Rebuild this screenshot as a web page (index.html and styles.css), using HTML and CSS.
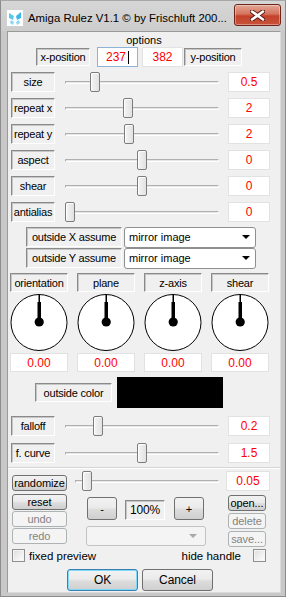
FILE: index.html
```
<!DOCTYPE html>
<html>
<head>
    <meta charset="utf-8">
    <title>Amiga Rulez</title>
    <link rel="stylesheet" href="styles.css">
</head>
<body>
<div class="window">
    <div class="titlebar">
        <svg class="app-icon" width="16" height="16" viewBox="0 0 16 16">
            <rect x="0" y="0" width="16" height="16" fill="#fff"/>
            <path d="M2 3 L7 6 L6 10 L2 8 Z" fill="#5cc8f0"/>
            <path d="M14 2 L9 6 L10 10 L14 8 Z" fill="#3fb6e8"/>
            <path d="M4 10 L7 12 L6 15 L3 13 Z" fill="#8ad8f5"/>
            <path d="M12 10 L9 12 L10 15 L13 13 Z" fill="#8ad8f5"/>
        </svg>
        <span class="title">Amiga Rulez V1.1 © by Frischluft 200...</span>
        <div class="close">
            <svg width="15" height="11" viewBox="0 0 15 11">
                <path d="M2 1.5 L13 9.5 M13 1.5 L2 9.5" stroke="#5a1a10" stroke-width="4.5" stroke-linecap="round"/>
                <path d="M2 1.5 L13 9.5 M13 1.5 L2 9.5" stroke="#fff" stroke-width="2.6" stroke-linecap="round"/>
            </svg>
        </div>
    </div>
    <div class="client">
        <div class="caption">options</div>
        <div class="xy-row">
            <div class="label xy-label">x-position</div>
            <div class="value edit focused">237<span class="caret"></span></div>
            <div class="value edit">382</div>
            <div class="label xy-label wide">y-position</div>
        </div>

        <div class="sliders">
            <div class="srow">
                <div class="label">size</div>
                <div class="slider"><div class="track"></div><div class="thumb" style="left:25px"></div></div>
                <div class="value">0.5</div>
            </div>
            <div class="srow">
                <div class="label">repeat x</div>
                <div class="slider"><div class="track"></div><div class="thumb" style="left:58px"></div></div>
                <div class="value">2</div>
            </div>
            <div class="srow">
                <div class="label">repeat y</div>
                <div class="slider"><div class="track"></div><div class="thumb" style="left:59px"></div></div>
                <div class="value">2</div>
            </div>
            <div class="srow">
                <div class="label">aspect</div>
                <div class="slider"><div class="track"></div><div class="thumb" style="left:72px"></div></div>
                <div class="value">0</div>
            </div>
            <div class="srow">
                <div class="label">shear</div>
                <div class="slider"><div class="track"></div><div class="thumb" style="left:72px"></div></div>
                <div class="value">0</div>
            </div>
            <div class="srow">
                <div class="label">antialias</div>
                <div class="slider"><div class="track"></div><div class="thumb" style="left:0px"></div></div>
                <div class="value">0</div>
            </div>
        </div>

        <div class="assume">
            <div class="arow">
                <div class="label alabel">outside X assume</div>
                <div class="select">mirror image<span class="arrow"></span></div>
            </div>
            <div class="arow">
                <div class="label alabel">outside Y assume</div>
                <div class="select">mirror image<span class="arrow"></span></div>
            </div>
        </div>

        <div class="dials">
            <div class="dial">
                <div class="label dlabel">orientation</div>
                <svg class="knob" width="60" height="58" viewBox="0 0 60 58">
                    <circle cx="30" cy="28.5" r="28" fill="#fff" stroke="#000"/>
                    <rect x="29.5" y="1" width="1.5" height="8" fill="#000"/>
                    <rect x="28.5" y="8" width="3.5" height="18" fill="#000"/>
                    <circle cx="30.2" cy="28" r="4.6" fill="#000"/>
                </svg>
                <div class="value dvalue">0.00</div>
            </div>
            <div class="dial">
                <div class="label dlabel">plane</div>
                <svg class="knob" width="60" height="58" viewBox="0 0 60 58">
                    <circle cx="30" cy="28.5" r="28" fill="#fff" stroke="#000"/>
                    <rect x="29.5" y="1" width="1.5" height="8" fill="#000"/>
                    <rect x="28.5" y="8" width="3.5" height="18" fill="#000"/>
                    <circle cx="30.2" cy="28" r="4.6" fill="#000"/>
                </svg>
                <div class="value dvalue">0.00</div>
            </div>
            <div class="dial">
                <div class="label dlabel">z-axis</div>
                <svg class="knob" width="60" height="58" viewBox="0 0 60 58">
                    <circle cx="30" cy="28.5" r="28" fill="#fff" stroke="#000"/>
                    <rect x="29.5" y="1" width="1.5" height="8" fill="#000"/>
                    <rect x="28.5" y="8" width="3.5" height="18" fill="#000"/>
                    <circle cx="30.2" cy="28" r="4.6" fill="#000"/>
                </svg>
                <div class="value dvalue">0.00</div>
            </div>
            <div class="dial">
                <div class="label dlabel">shear</div>
                <svg class="knob" width="60" height="58" viewBox="0 0 60 58">
                    <circle cx="30" cy="28.5" r="28" fill="#fff" stroke="#000"/>
                    <rect x="29.5" y="1" width="1.5" height="8" fill="#000"/>
                    <rect x="28.5" y="8" width="3.5" height="18" fill="#000"/>
                    <circle cx="30.2" cy="28" r="4.6" fill="#000"/>
                </svg>
                <div class="value dvalue">0.00</div>
            </div>
        </div>

        <div class="color-row">
            <div class="label clabel">outside color</div>
            <div class="swatch"></div>
        </div>

        <div class="sliders falloff">
            <div class="srow">
                <div class="label">falloff</div>
                <div class="slider"><div class="track"></div><div class="thumb" style="left:28px"></div></div>
                <div class="value">0.2</div>
            </div>
            <div class="srow">
                <div class="label">f. curve</div>
                <div class="slider"><div class="track"></div><div class="thumb" style="left:72px"></div></div>
                <div class="value">1.5</div>
            </div>
        </div>

        <div class="separator"></div>

        <div class="rand-row">
            <div class="btn">randomize</div>
            <div class="slider rslider"><div class="track"></div><div class="thumb" style="left:7px"></div></div>
            <div class="value rvalue">0.05</div>
        </div>

        <div class="tools">
            <div class="col-left">
                <div class="btn">reset</div>
                <div class="btn disabled">undo</div>
                <div class="btn disabled">redo</div>
            </div>
            <div class="col-mid">
                <div class="zoom-row">
                    <div class="btn big">-</div>
                    <div class="label zoombox">100%</div>
                    <div class="btn big">+</div>
                </div>
                <div class="combo"><span class="arrow grey"></span></div>
            </div>
            <div class="col-right">
                <div class="btn">open...</div>
                <div class="btn disabled">delete</div>
                <div class="btn disabled">save...</div>
            </div>
        </div>

        <div class="checks">
            <div class="check"><span class="box"></span>fixed preview</div>
            <div class="check right">hide handle<span class="box"></span></div>
        </div>

        <div class="dialog-buttons">
            <div class="btn dlg default">OK</div>
            <div class="btn dlg">Cancel</div>
        </div>
    </div>
</div>
</body>
</html>
```

FILE: styles.css
```
* {
    margin: 0;
    padding: 0;
    box-sizing: border-box;
}

body {
    background-color: #ffffff;
    font-family: "Liberation Sans", Tahoma, sans-serif;
    font-size: 11px;
    color: #000000;
}

.window {
    width: 286px;
    height: 597px;
    background-color: #c8c8c8;
    border: 1px solid #8c8c8c;
    border-top-color: #a8a8a8;
    display: flex;
    flex-direction: column;
    padding: 0 4px 3px 6px;
}

.titlebar {
    height: 30px;
    display: flex;
    align-items: center;
    background: linear-gradient(#d6d6d6, #cdcdcd);
    margin: 0 -4px 0 -6px;
    padding: 0 4px 0 6px;
}

.app-icon {
    flex: none;
    margin-top: 3px;
}

.title {
    flex: 1;
    margin-left: 5px;
    margin-top: 3px;
    font-size: 11.4px;
    white-space: nowrap;
    color: #000;
}

.close {
    flex: none;
    width: 47px;
    height: 22px;
    margin-top: -2px;
    border: 1px solid #6d2419;
    border-radius: 3px;
    background: linear-gradient(#e3a796 0%, #d4745e 45%, #c4412a 55%, #c8523a 100%);
    display: flex;
    align-items: center;
    justify-content: center;
    box-shadow: inset 0 0 0 1px rgba(255, 255, 255, 0.35);
}

.client {
    flex: 1;
    background-color: #f0f0f0;
    border: 1px solid #9a9a9a;
    border-right-color: #dadada;
    border-bottom-color: #dadada;
    display: flex;
    flex-direction: column;
}

.caption {
    height: 14px;
    line-height: 14px;
    text-align: center;
    font-size: 11px;
    margin-top: 1px;
}

.label {
    background-color: #f0f0f0;
    border: 1px solid;
    border-color: #8a8a8a #ffffff #ffffff #8a8a8a;
    box-shadow: inset 1px 1px 0 #c6c6c6;
    display: flex;
    align-items: center;
    justify-content: center;
    white-space: nowrap;
    font-size: 11px;
    letter-spacing: -0.2px;
}

.value {
    background-color: #ffffff;
    border: 1px solid #e2e2e2;
    color: #ff0000;
    font-size: 12px;
    display: flex;
    align-items: center;
    justify-content: center;
}

.xy-row {
    display: flex;
    align-items: center;
    height: 20px;
    margin-top: 0;
    padding-left: 28px;
}

.xy-label {
    width: 54px;
    height: 18px;
}

.xy-label.wide {
    width: 58px;
    margin-left: 1px;
}

.edit {
    width: 41px;
    height: 20px;
    margin-left: 7px;
}

.edit + .edit {
    margin-left: 4px;
}

.edit.focused {
    border-color: #8fb3d6;
}

.caret {
    display: inline-block;
    width: 1px;
    height: 13px;
    background-color: #000;
    margin-left: 2px;
}

.sliders {
    display: flex;
    flex-direction: column;
    gap: 6px;
    margin-top: 5px;
}

.srow {
    display: grid;
    grid-template-columns: 44px 154px 41px;
    column-gap: 10px;
    padding-left: 3px;
    height: 20px;
    align-items: center;
}

.srow .label {
    height: 20px;
}

.srow .value {
    height: 20px;
    margin-left: -1px;
}

.slider {
    position: relative;
    height: 20px;
}

.track {
    position: absolute;
    left: 0;
    right: 0;
    top: 9px;
    height: 3px;
    border-top: 1px solid #b0b0b0;
    border-bottom: 1px solid #ffffff;
    border-left: 1px solid #b0b0b0;
    border-right: 1px solid #ffffff;
    background-color: #e6e6e6;
}

.thumb {
    position: absolute;
    top: 0;
    width: 10px;
    height: 20px;
    border: 1px solid #7c7c7c;
    border-radius: 2px;
    background: linear-gradient(90deg, #f4f4f4, #e2e2e2);
    box-shadow: inset 1px 1px 0 #ffffff;
}

.assume {
    display: flex;
    flex-direction: column;
    gap: 1px;
    margin-top: 5px;
    padding-left: 18px;
}

.arow {
    display: flex;
    align-items: center;
    height: 20px;
}

.alabel {
    width: 96px;
    height: 20px;
}

.select {
    width: 132px;
    height: 21px;
    margin-left: 2px;
    background-color: #ffffff;
    border: 1px solid #8e8f8f;
    border-radius: 3px;
    display: flex;
    align-items: center;
    padding-left: 4px;
    font-size: 11px;
}

.arrow {
    margin-left: auto;
    margin-right: 5px;
    width: 0;
    height: 0;
    border-left: 4px solid transparent;
    border-right: 4px solid transparent;
    border-top: 4px solid #000000;
}

.arrow.grey {
    border-top-color: #a8a8a8;
    margin-right: 8px;
}

.dials {
    display: flex;
    gap: 7px;
    margin-top: 5px;
    padding-left: 1px;
}

.dial {
    width: 60px;
    display: flex;
    flex-direction: column;
    align-items: center;
}

.dlabel {
    width: 58px;
    height: 19px;
}

.knob {
    display: block;
    margin-top: 2px;
}

.dvalue {
    width: 58px;
    height: 19px;
    margin-top: 1px;
}

.color-row {
    display: flex;
    align-items: center;
    margin-top: 5px;
    padding-left: 27px;
}

.clabel {
    width: 77px;
    height: 19px;
}

.swatch {
    width: 106px;
    height: 31px;
    margin-left: 5px;
    background-color: #000000;
}

.sliders.falloff {
    margin-top: 8px;
    gap: 7px;
}

.separator {
    margin-top: 4px;
    height: 2px;
    border-top: 1px solid #d5d5d5;
    border-bottom: 1px solid #ffffff;
}

.rand-row {
    display: grid;
    grid-template-columns: 55px 143px 42px;
    column-gap: 9px;
    align-items: center;
    height: 20px;
    margin-top: 2px;
    padding-left: 4px;
}

.rand-row .btn {
    height: 16px;
    margin-top: 3px;
}

.rslider {
    margin-left: -1px;
}

.rvalue {
    height: 20px;
    margin-left: -2px;
}

.btn {
    border: 1px solid #707070;
    border-radius: 3px;
    background: linear-gradient(#f2f2f2 0%, #ebebeb 45%, #dddddd 55%, #cfcfcf 100%);
    display: flex;
    align-items: center;
    justify-content: center;
    font-size: 11px;
    letter-spacing: -0.1px;
    white-space: nowrap;
}

.btn.disabled {
    border-color: #adb2b5;
    background: #f4f4f4;
    color: #838383;
}

.tools {
    display: grid;
    grid-template-columns: 55px 120px 41px;
    column-gap: 19px;
    margin-top: 3px;
    padding-left: 4px;
}

.col-left,
.col-right {
    display: flex;
    flex-direction: column;
    gap: 1px;
}

.col-left .btn,
.col-right .btn {
    height: 16px;
}

.col-right {
    margin-left: 3px;
    margin-top: 1px;
    gap: 2px;
}

.col-mid {
    display: flex;
    flex-direction: column;
}

.zoom-row {
    display: flex;
    align-items: flex-end;
    margin-top: 3px;
    padding-left: 1px;
}

.btn.big {
    width: 30px;
    height: 23px;
}

.zoombox {
    width: 40px;
    height: 20px;
    margin: 0 9px 0 8px;
    font-size: 12px;
}

.combo {
    margin-top: 6px;
    height: 20px;
    border: 1px solid #c3c3c3;
    border-radius: 3px;
    background-color: #f4f4f4;
    display: flex;
    align-items: center;
}

.checks {
    display: flex;
    align-items: center;
    justify-content: space-between;
    height: 13px;
    margin-top: 2px;
    padding: 0 14px 0 4px;
}

.check {
    display: flex;
    align-items: center;
    font-size: 11.5px;
}

.box {
    width: 13px;
    height: 13px;
    border: 1px solid #8e8f8f;
    background: linear-gradient(135deg, #dcdcdc, #ffffff);
    box-shadow: inset 0 0 0 1px #f4f4f4;
    margin-right: 4px;
}

.check.right .box {
    margin-right: 0;
    margin-left: 12px;
}

.dialog-buttons {
    display: flex;
    gap: 4px;
    margin-top: 7px;
    padding-left: 59px;
}

.btn.dlg {
    width: 71px;
    height: 22px;
    font-size: 12px;
}

.btn.default {
    border-color: #3c7fb1;
    box-shadow: inset 0 0 0 1px #7fd9f8;
}
```
